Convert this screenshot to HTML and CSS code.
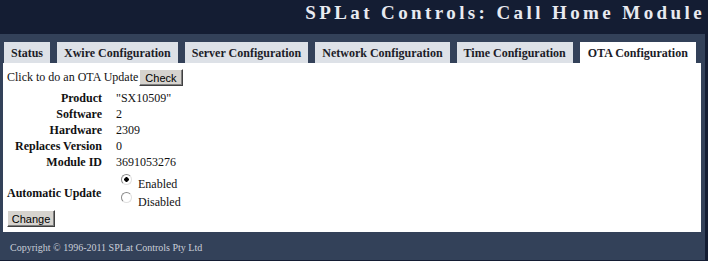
FILE: index.html
```html
<!DOCTYPE html>
<html lang="en">
<head>
  <meta charset="UTF-8">
  <title>SPLat Controls: Call Home Module</title>
  <link rel="stylesheet" href="styles.css">
</head>
<body>
  <div class="page">
    <div class="header">SPLat Controls: Call Home Module</div>

    <ul class="tabs">
      <li class="tab">Status</li>
      <li class="tab">Xwire Configuration</li>
      <li class="tab">Server Configuration</li>
      <li class="tab">Network Configuration</li>
      <li class="tab">Time Configuration</li>
      <li class="tab active">OTA Configuration</li>
    </ul>

    <div class="content">
      <div class="check-row">
        Click to do an OTA Update <button class="btn">Check</button>
      </div>

      <div class="info">
        <div class="label">Product</div><div class="value">"SX10509"</div>
        <div class="label">Software</div><div class="value">2</div>
        <div class="label">Hardware</div><div class="value">2309</div>
        <div class="label">Replaces Version</div><div class="value">0</div>
        <div class="label">Module ID</div><div class="value">3691053276</div>
        <div class="label auto">Automatic Update</div>
        <div class="value radios">
          <label><input type="radio" name="auto" checked> Enabled</label>
          <label><input type="radio" name="auto"> Disabled</label>
        </div>
      </div>

      <button class="btn change">Change</button>
    </div>

    <div class="footer">Copyright &copy; 1996-2011 SPLat Controls Pty Ltd</div>
  </div>
</body>
</html>
```

FILE: styles.css
```css
body {
  margin: 0;
  background-color: #141d33;
  font-family: "Liberation Serif", serif;
  font-size: 12px;
  color: #111;
}
.page {
  width: 705px;
  background-color: #334159;
}
.header {
  height: 34px;
  line-height: 26px;
  background-color: #141d33;
  color: #e8eaf0;
  font-size: 19px;
  font-weight: bold;
  letter-spacing: 3.4px;
  text-align: right;
}
.tabs {
  display: flex;
  gap: 7px;
  list-style: none;
  margin: 0;
  padding: 8px 0 0 4px;
}
.tab {
  height: 21px;
  line-height: 22px;
  padding: 0 7px;
  background-color: #dde1e7;
  font-weight: bold;
  font-size: 12px;
  color: #1c1c28;
  white-space: nowrap;
}
.tab.active {
  background-color: #fff;
  padding: 0 8px;
}
.content {
  margin: 0 4px 0 3px;
  padding: 6px 4px 5px 4px;
  background-color: #fff;
}
.check-row {
  display: flex;
  align-items: center;
  gap: 1px;
}
.btn {
  font-family: "Liberation Sans", Arial, sans-serif;
  font-size: 11px;
  color: #000;
  background-color: #d6d3ce;
  border: 1px solid;
  border-color: #fff #404040 #404040 #fff;
  box-shadow: inset -1px -1px 0 #808080;
  padding: 0 5px;
  height: 17px;
}
.info {
  display: grid;
  grid-template-columns: 95px auto;
  column-gap: 14px;
  margin-top: 4px;
}
.label {
  font-weight: bold;
  text-align: right;
  height: 16px;
  line-height: 16px;
}
.value {
  height: 16px;
  line-height: 16px;
}
.label.auto {
  height: 38px;
  line-height: 46px;
  text-align: left;
}
.radios {
  height: 38px;
  display: flex;
  flex-direction: column;
  padding-top: 2px;
  box-sizing: border-box;
}
.radios label {
  height: 18px;
  display: flex;
  align-items: center;
  padding-top: 6px;
  box-sizing: border-box;
}
.radios input {
  appearance: none;
  margin: -9px 6px 0 5px;
  width: 11px;
  height: 11px;
  border: 1px solid #8a8a8a;
  border-right-color: #e0e0e0;
  border-bottom-color: #e0e0e0;
  border-radius: 50%;
  background-color: #fff;
}
.radios input:checked {
  background: radial-gradient(circle, #000 0 2px, #fff 2.5px);
}
.change {
  margin-top: 2px;
  width: 48px;
  padding: 0;
}
.footer {
  height: 28px;
  line-height: 31px;
  padding-left: 10px;
  font-size: 10px;
  color: #c9ced8;
}
```
